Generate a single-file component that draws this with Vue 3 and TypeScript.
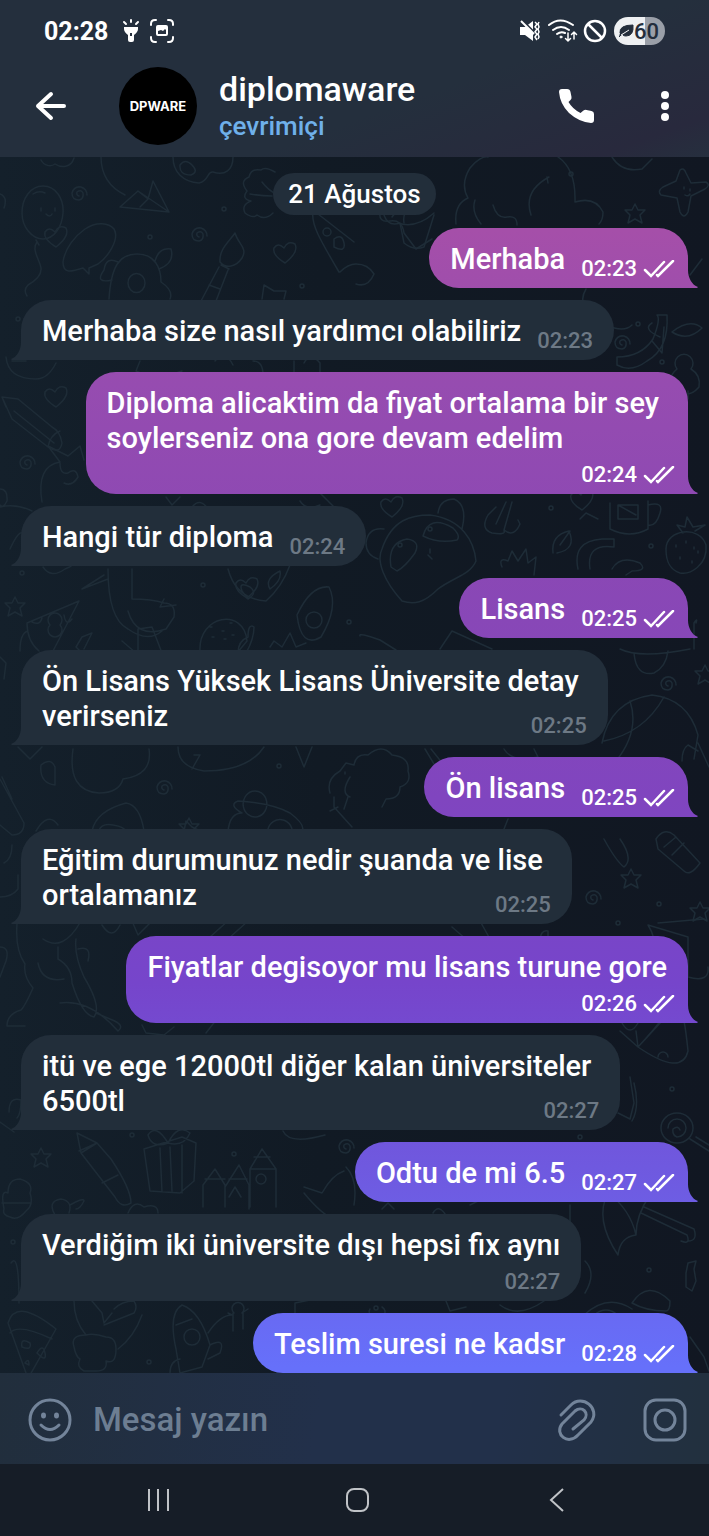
<script setup lang="ts">
import { ref } from 'vue'

interface Message {
  lines: string[]
  time: string
  own: boolean
  layout: 'inline' | 'tucked' | 'stacked' | 'stacked wide'
}

const messages: Message[] = [
  { lines: ['Merhaba'], time: '02:23', own: true, layout: 'inline' },
  { lines: ['Merhaba size nasıl yardımcı olabiliriz'], time: '02:23', own: false, layout: 'inline' },
  { lines: ['Diploma alicaktim da fiyat ortalama bir sey', 'soylerseniz ona gore devam edelim'], time: '02:24', own: true, layout: 'stacked wide' },
  { lines: ['Hangi tür diploma'], time: '02:24', own: false, layout: 'inline' },
  { lines: ['Lisans'], time: '02:25', own: true, layout: 'inline' },
  { lines: ['Ön Lisans Yüksek Lisans Üniversite detay', 'verirseniz'], time: '02:25', own: false, layout: 'tucked' },
  { lines: ['Ön lisans'], time: '02:25', own: true, layout: 'inline' },
  { lines: ['Eğitim durumunuz nedir şuanda ve lise', 'ortalamanız'], time: '02:25', own: false, layout: 'tucked' },
  { lines: ['Fiyatlar degisoyor mu lisans turune gore'], time: '02:26', own: true, layout: 'stacked' },
  { lines: ['itü ve ege 12000tl diğer kalan üniversiteler', '6500tl'], time: '02:27', own: false, layout: 'tucked' },
  { lines: ['Odtu de mi 6.5'], time: '02:27', own: true, layout: 'inline' },
  { lines: ['Verdiğim iki üniversite dışı hepsi fix aynı'], time: '02:27', own: false, layout: 'stacked' },
  { lines: ['Teslim suresi ne kadsr'], time: '02:28', own: true, layout: 'inline' },
]

const draft = ref('')

type Point = [number, number]
const spirals: Point[] = [[79, 38], [199, 79], [27, 307], [668, 528], [164, 632], [593, 742], [346, 991], [622, 187]]
const hearts: Point[] = [[285, 96], [56, 80], [392, 350], [247, 431], [582, 343], [56, 240]]
const stars: Point[] = [[635, 56], [15, 449], [189, 670], [631, 721], [41, 1000], [705, 517], [700, 754]]
const dots: Point[] = [
  [224, 52], [150, 80], [302, 129], [571, 17], [638, 167], [662, 205], [400, 388], [430, 372], [22, 416],
  [203, 428], [349, 465], [551, 351], [651, 389], [279, 609], [659, 747], [618, 766], [132, 978], [234, 997],
  [672, 932], [149, 1205], [13, 1085], [649, 1113], [580, 980], [376, 1151], [18, 162],
]
const doodles: string[] = [
  // balloon, paper plane, palette, cloud
  'M43 29c13 0 21 13 20 27S54 82 43 82 22 70 22 56s8-27 21-27zM36 83l3 5M37 85c-6 8 3 18 4 26s-6 13-13 17c-4 4-3 8-1 11M41 51v3m14-3v3m-9 3q4 4 6 0M33 37q6-4 12-1',
  'M120 50l18-16 10 8 5-18 16 31zM138 34l31 21M148 42l-8 8',
  'M101 0c0 18 8 30 24 38M173 0c0 15 10 25 26 26 10-2 8-12 14-11 12 4 20-2 20-15M180 8q5-7 12 0t-1 10q-12 0-11-10z',
  'M41 3c3 6 10 7 14 4 6 4 16 4 19-6M0 37q8 3 4 14',
  // flower, cone, brush, speech bubble
  'M275 15q-10-6-14-2-10-2-12 7-10 4-2 14-6 8 4 10-10 4-6 12 8 6 12 2 8 6 16-2M262 25q6 8 14 12M250 37q12 2 22 2',
  'M63 105c2-14 12-26 22-33 12-8 24-6 29 0 6 10-6 28-16 35l-9 4 0 6-6-6c-12 4-20 6-20-6z',
  'M235 76c-6 9-16 16-15 29 6 7 16 5 22-4 6-10-4-14-7-25zM221 108l8 4M219 110l-18 34M228 113l-12 31M209 128l11 4',
  'M313 55c-2 12 6 26 26 60M318 57l36 28M340 115q8-8 16-8 12 0 18 10-6 14-18 10M323 75a4 4 0 1 0 8 0 4 4 0 1 0-8 0M334 82q8-6 10 4t-10 4z',
  // puppy
  'M109 142c2-32 10-45 28-45 18 0 24 14 24 28 6 4 12 10 9 17M128 126a8 9 0 1 0 17 0 8 9 0 1 0-17 0M118 105q-12-6-14 8-10 14 8 10M155 104q4-14 16-12 4 14-12 20',
  'M262 142l2-14 10 6 12 0-2 8M380 54q-2 12 10 10t14 12l12 16 16-10M392 60l8-10m4 16q-2-12 8-14',
  // teddy, starfish, cactus
  'M470 11q-10 16-2 30-14 6-12 26M470 11c6-8 14-12 18-11M558 0q18 12 17 45 20-6 28 10 0 8-4 12M531 58q-8-24 18-38m-2 0l1 6M475 43q-4 12 6 24M493 48q4 14 14 12t10 8',
  'M680 13q4-3 6 3l5 10 15-1q5 3-1 7l-14 7-3 16q-4 8-8 0l-3-14-16-3q-4-4 2-8l13-6zM684 30v2m6 0v2m-5 4q3 2 5-1M612 0q10 16 30 12l10-10',
  'M400 66l4 20q10 8 20 4l10-32M398 66q18 6 36-10M384 58q4 12 16 8',
  // arm with fish, waffle
  'M586 132q-12 20 20 36 18 8 26 0M660 180q-18-8-8-14M672 175q18-14 30-4-14 14-30 4zM690 118l12-16M664 170l-2 26-10-12M617 200q24 0 36-18 8-20 4-24l10 0q2 34-20 46-16 12-30 4z',
  'M677 212a9 9 0 1 1 14 0M677 212q-12 10-2 22 14 8 24-4 2-12-8-18M688 234v8',
  // fruit bowl, pencil, cat
  'M6 200q2 22 30 22 12 0 20-16M12 204l14 0M140 204l-4 10q20 10 46 0M215 204q10-12 18 4m20-4q10 0 10 14M294 204v12m10-10q6-12 16 0v10',
  'M2 240l10 22 36 28q12 8 14-4-2-12-10-16l-34-28zM2 240l4 10M48 290q2-12 12-16M14 254l40 32',
  'M42 345q-6-36 18-40l-12-16 20 10 12-10 4 14M60 306q0 12 8 10 8-6 10 4-6 10-14 6',
  'M0 332q8 0 7 12-4 8-7 4M0 350q16-4 32 4M166 340l6 8 8-8M192 350q8-10 16 2M300 344q6 10 20 4M320 336l14 14',
  // panda
  'M402 444c-18-20-26-40-20-52 10-30 30-34 48-34 32 4 44 26 46 46-6 14-22 16-38 28-14 14-24 16-36 12zM438 356q2-14 16-14 14 6 8 30M384 372q-16-2-18 14 0 12 12 16M391 410q-4-24 16-28 14 2 8 14-10 14-18 18zM423 379q6-22 30-8 8 8 4 12-18 4-34-4zM428 398l4 4m-2-10v4',
  // anchor, mug, leaf, strawberry
  'M506 345l-10 22m16-22l-8 28q10 8 16-6l-2-4M496 350l-8 8m0 0q-8 14 4 18 14 2 12-2',
  'M610 346v26q20 10 38 0v-28M648 348q16-4 12 8-4 14-12 12M618 348h20v14h-20zM618 348l18 10',
  'M553 396q-2-18 16-22 8 18-12 22M560 388l10-14M580 362l6-6 12 6',
  'M666 392c0-20 34-24 40-4 2 20-16 30-26 28-12-4-14-14-14-24zM683 376l-6-8 8 2 2-10 6 10 12-2-10 6M676 388v2m10-6v2m8 4v2m-14 8v2m12 2v2m6-12v2',
  'M502 410q-4-10 6-6l4-10 6 10 8-12 2 14 8-6-2 18M578 412q-6-28 24-30h12v8q-28-4-24 22M612 412q8-14 28-6 8 8-8 8l-6 4',
  // stork
  'M108 412q0 50 20 60 20 14 34 2M132 412v30q20 0 32 4 12 0 10 14l-8 12q-30 10-38-18M82 432l26-10M82 432l22-14M164 442l-4 8 16-2M138 472v22m0-22l14-2 10 26M43 410q8 12 22 2 12-4 10-12M10 392q10-22 14-14',
  // party hat, burger, avocado, corn
  'M27 466l52-22-26 50M27 466q0 18 12 28M50 468a7 7 0 1 0 10 0 7 7 0 1 0-10 0M32 465q8 4 10-4M64 458q2 12 8 4M20 494q0-18 8-20',
  'M200 494c-2-36 44-44 47-10l-10 12zM238 496q0-12 10-16 0-14 6-10 0 12-8 26M210 470h2m10 4h2m6-8h2m-8 16h2m6-4h2m-22 2h2M270 490l4-6 8 6 8-14 6 14 10-4',
  'M297 458q14-30 32-28 10 20-8 50-20 12-24-22zM306 463a8 8 0 1 0 16 0 8 8 0 1 0-16 0',
  'M228 412q8 30 38 32 16-14 24-36M242 434q-4-10 8-4 8 6-2 12zM270 432q-6-10 10-18 2 10-10 18M360 479q-2-4 20 4l16 10M440 492l12-18 40 18M82 496l-6-6 6-10 10-4-8 16M122 484l14 12',
  // kite, lemon, ball
  'M18 590l12 12 12-12M73 592q-6 42 26 44 20 0 24-14 30-4 26-30M178 590q0 20 26 24 44 0 60-24M192 612l8-14-6 0M296 590l8 20 8-20',
  'M0 622l24 44q0 12-12 12L0 668M2 620l10 22M41 608q10-8 14 2v18q-16-2-14-20zM0 500l6 6-2 16',
  'M602 586q8-42 50-48 36 4 46 40l-4 24M630 544q10 30-14 60M604 584q40-8 60-44M682 604q0-12 6-16l10 6M698 586l11 24',
  'M634 496q2 24 20 20 12-6 14-22M620 492q20 10 70 0M694 492v-26q4-6 2 0',
  'M92 674q4-20 34-28 14 2 18 28M99 674q2-8 14-6t12 6M36 674q12-20 22-6M184 674l2-10 6 6 8 4',
  // astronaut, sheep
  'M228 674q2-18 14-18-14-8-4-12 34 2 52 12 16 12 12 18 20 0 12 18M245 640a10 11 0 1 1 20 14 10 11 0 0 1-20-14M268 672a12 12 0 1 1 24 6',
  'M330 636q-4-14 10-22l6-8 8 2M334 640v10l18 20m-22-16l8-4M354 608q2-12 14-10 14-12 24 0 18 2 16 16 4 12-8 16 0 12-14 12l-4 8m-34-10l-4 12M345 615v2M350 640q-10-4 0-20',
  'M425 592l12 20m-6-20l16 20M504 592q8 14 34 8l-4-8M515 608q20-12 24-2',
  // socks, can, violin
  'M656 682q8-12 18-4l26 28q-10 14-16 8l-26-22zM664 690l12-10M672 698l12-12M604 682q12 22 20 28 10-8-4-28M500 682l8-20m4 24q12 10 22 0',
  'M0 740q12 0 18-8v-14M0 790q10 0 6 14l-6 16M12 688q0 14-8 18',
  // guitar and crocodile
  'M17 767q-2 26 8 40-2 12 8 24-8 18-12 22-14 4-14 16h18M43 782q20 14 38-18M58 790v12q14 8 14 24 10 32 22 34 8-10-10-40-10-22-8-38M38 806q4 20 26 16M78 792q14-4 10 12M102 768q10 16 18 0M132 764l6 14 12-12M60 846q30-4 58 28 8-6-8-12l-14-6M142 868l4 8 18 2 10-8M206 876l14-18 10 6',
  'M210 780l20-18M228 782l20-18M452 770l30 26M480 764l10 18M540 786q0-14 8-12v12M648 768l40 12 0 40q22 6 20-10M648 768q4 6 6 14m4-16 46-4',
  // pizza, rocket, lollipop
  'M620 874l18 16 24-26M638 890l-2-16M638 890q20-22 22-26M638 890q44 30 50 4-2-20-4-30M622 866q8 14 16 0M658 900a5 5 0 1 1 10 0',
  'M9 955q0-16 12-12 0 14-4 18M14 975l-14-10M630 920l4 26-4 16-12-6M634 926q6 24-2 38',
  'M661 971a16 15 0 1 0 32 0 16 15 0 1 0-32 0M668 971a9 9 0 1 1 9 9q-5-2-4-8 5-4 7 1M690 982l19 12M696 980l13 8',
  'M77 976l4 20 16-10zM81 996l34 44q6 12 16 6 0-14-20-44l-14-16M102 1026l16-8M97 986l-18 8',
  'M144 992l6 42 30 2 14-12 2-38-14-6zM182 988l0 48M160 991l2 44M170 990l2 44M168 986q-12-20-20-8 4 14 20 8zm0 0q10-20 22-10-6 14-22 10M283 974q6 14 42 4',
  // castle
  'M203 1050v-22l12-16 10 16v22M225 1030l14-22 10 20v24M250 1050v-38h26v38M250 1012l12-20 14 20M256 1022a5 5 0 1 0 10 0 5 5 0 1 0-10 0M254 1000h16M205 1022h20m4 0h18M229 1040l6-10 6 10',
  'M4 1052q-4-20 4-16 0-14 12-14 14 4 10 14 4 12-4 18-8 10-16 6-8-2-6-8zM2 1046h28M55 1058q-8-14 6-16 12 2 8 14M70 1048q14-8 14-4-4 8-8 8M304 1036q18 22 30 26M304 1030l18 6q10-18 22-22M346 1010q12 12 8 38',
  'M128 1056q6-14 16-6 14-4 14 6M382 1052l6-6 6 6M433 1056q6-10 14 4M470 1048l8-4M570 1048v18M11 1106q8-12 8 40M585 1104q12 12 0 32',
  // pizza slice, dinosaur, rocket, diver
  'M8 1166q8-26 48 6l-26 46M8 1166l18 50M10 1176q8-10 42 6M22 1190q-2-10 8-4 2 8-8 4M37 1196q6-10 8 0t-8 0M25 1206q4-6 4 2z',
  'M74 1144q0 20 12 34-16 0-12 12 2 10 6 12-4 8 4 12h12q12 0 10-10 10 4 10-12 0-12-10-12-12-4-20-2M118 1192q16-12 24-34M104 1168l30-12q4-6 0-12-12 0-20 8M92 1144l10 12 2 10 8-10',
  'M176 1192q-8-36 6-44 18 6 28 40l-8 22-22 6zM176 1168l16-6M184 1180a8 8 0 1 0 16 0 8 8 0 1 0-16 0M170 1216q0-12 10-14M210 1188q16-8 10 8l-12 6M208 1176q12-18 24-18M234 1156a6 6 0 1 1 8 0l6-4m-16 6-4-2m5 0v18m10-18 0 16',
  // umbrella, mushroom, candy
  'M608 1036q-14 26 10 62 2-18 18-20-6-26-28-42zM608 1036q20-10 44 2-10-2-14 6M636 1078q0-20 14-40M610 1032q14-14 38-10l4 16M641 1056l46 22q4 10-6 6M644 1050l50 22q4 12-6 12',
  'M632 1146q16-24 38-2 0 10-4 10-20 0-34-8zM584 1158q24-22 48-6M594 1158q12-10 24 0M688 1106l8-2-2 8 2 12-4 10-6-4 0-14zM690 1180l14 20 5 14M446 1144l4 10 16-4M500 1148q18 14 44-4',
  'M295 1158v-12l20-4M370 1152a8 6 0 1 0 12-2',
]
</script>

<template>
  <div class="phone">
    <header class="top">
      <div class="status">
        <span class="clock">02:28</span>
        <svg class="torch" width="18" height="24" viewBox="0 0 18 24" aria-hidden="true">
          <path d="M2 8h14v2q0 3-4 6v5q0 2-2 2H8q-2 0-2-2v-5Q2 13 2 10z" fill="#fff" />
          <path d="M9 1v2M2 3l2 2M16 3l-2 2" stroke="#fff" stroke-width="2" stroke-linecap="round" />
          <path d="M9 14v3" stroke="#26303e" stroke-width="2" />
        </svg>
        <svg width="24" height="24" viewBox="0 0 24 24" fill="none" aria-hidden="true">
          <path d="M1 6V5q0-4 4-4h1M18 1h1q4 0 4 4v1M23 18v1q0 4-4 4h-1M6 23H5q-4 0-4-4v-1" stroke="#fff" stroke-width="2" stroke-linecap="round" />
          <rect x="6" y="6" width="12" height="11" rx="2" fill="#fff" />
          <path d="M8 15v-3l3-1 2 1 2-2 1 1v4z" fill="#26303e" />
        </svg>
        <span class="spring"></span>
        <svg class="mute" width="22" height="22" viewBox="0 0 22 22" fill="none" aria-hidden="true">
          <path d="M1 7h5l8-6v20l-8-6H1z" fill="#fff" />
          <path d="M3 0l13 13" stroke="#26303e" stroke-width="2" />
          <path d="M2 1l13 13" stroke="#fff" stroke-width="2" />
          <path d="M16 2l2 2-2 3 2 2-2 3 2 2-2 3 2 3M20 2l-1 2 1 3-1 2 1 3-1 2 1 3-1 2" stroke="#fff" stroke-width="1.500" />
        </svg>
        <svg width="30" height="24" viewBox="0 0 30 24" fill="none" stroke="#fff" stroke-width="2" stroke-linecap="round" aria-hidden="true">
          <path d="M1 6q11-9 24 0M5 11q8-6 16 0M9 15q4-3 8-1" />
          <circle cx="13" cy="18" r="1" fill="#fff" stroke-width="1" />
          <path d="M20 14v8m-2.500-2.500L20 22l2.500-2.500M26 20v-7m-2.500 2.500L26 13l2.500 2.500" stroke-width="1.500" />
        </svg>
        <svg width="24" height="24" viewBox="0 0 24 24" fill="none" stroke="#fff" stroke-width="2.500" aria-hidden="true">
          <circle cx="12" cy="12" r="10" />
          <path d="M5 5l14 14" />
        </svg>
        <span class="battery">
          <svg width="16" height="16" viewBox="0 0 16 16" aria-hidden="true">
            <path d="M2 10Q1 2 15 2q1 11-7 11-2 0-3-1l6-5-8 5-2 2" fill="#232d3b" stroke="#232d3b" />
            <path d="M3 12l8-5" stroke="#eef0f2" />
          </svg>60
        </span>
      </div>
      <div class="bar">
        <button class="icon-btn back" type="button" aria-label="Geri">
          <svg width="32" height="30" viewBox="0 0 32 30" fill="none" stroke="#fff" stroke-width="4" stroke-linecap="round" stroke-linejoin="round">
            <path d="M16 3L3 15l13 12M3 15h26" />
          </svg>
        </button>
        <div class="avatar">DPWARE</div>
        <div class="who">
          <h1>diplomaware</h1>
          <p>çevrimiçi</p>
        </div>
        <button class="icon-btn call" type="button" aria-label="Ara">
          <svg width="36" height="36" viewBox="0 0 36 36" fill="#fff">
            <path d="M3 1h5q3 0 3.500 3l1 5q.3 2-1 3l-2 2q4 7 12 11l3-2.500q1.500-1 3-.5l5 1q2.500.5 2.500 3v6q0 3-3 3Q20 34 10 25 1 16 0 4q0-3 3-3z" />
          </svg>
        </button>
        <button class="icon-btn more" type="button" aria-label="Diğer">
          <svg width="10" height="32" viewBox="0 0 10 32" fill="#fff">
            <circle cx="5" cy="5" r="4" /><circle cx="5" cy="16" r="4" /><circle cx="5" cy="27" r="4" />
          </svg>
        </button>
      </div>
    </header>

    <main class="chat">
      <svg class="wallpaper" viewBox="0 0 709 1216" preserveAspectRatio="xMidYMin slice" aria-hidden="true">
        <defs>
          <path id="spiral" d="M0 1q-3-1-2-4 4-3 6 1 1 6-4 7-7 0-7-7 2-7 9-6 6 2 6 8" />
          <path id="heart" d="M0 10Q-13 2-11-5q4-6 10 0 4-8 11-4 4 8-10 19z" />
          <path id="star" d="M0-9l3 6 7 0-5 5 2 8-7-4-7 4 2-8-5-5 7 0z" />
        </defs>
        <g>
          <path v-for="(d, i) in doodles" :key="i" :d="d" />
          <use v-for="([x, y], i) in spirals" :key="'s' + i" href="#spiral" :x="x" :y="y" />
          <use v-for="([x, y], i) in hearts" :key="'h' + i" href="#heart" :x="x" :y="y" />
          <use v-for="([x, y], i) in stars" :key="'t' + i" href="#star" :x="x" :y="y" />
          <circle v-for="([x, y], i) in dots" :key="'d' + i" :cx="x" :cy="y" r="2" />
        </g>
      </svg>

      <time class="day">21 Ağustos</time>
      <article
        v-for="(m, i) in messages"
        :key="i"
        class="bubble"
        :class="[m.own ? 'own' : 'peer', m.layout]"
      >
        <p><span v-for="(line, n) in m.lines" :key="n" class="line">{{ line }}</span></p>
        <span class="meta">
          <time>{{ m.time }}</time>
          <svg v-if="m.own" width="32" height="18" viewBox="0 0 32 18" fill="none" stroke="#fff" stroke-width="2.500" stroke-linecap="round" role="img" aria-label="Okundu">
            <path d="M2 10l6 6L21 2M14 15l1 1L30 1" />
          </svg>
        </span>
      </article>
    </main>

    <form class="composer" @submit.prevent>
      <button class="icon-btn" type="button" aria-label="Emoji">
        <svg width="44" height="44" viewBox="0 0 44 44" fill="none" stroke="#73849a" stroke-width="3" stroke-linecap="round">
          <circle cx="22" cy="22" r="20" />
          <path d="M13 27q9 9 18 0" />
          <ellipse cx="15.500" cy="17.500" rx="1" ry="1.500" />
          <ellipse cx="28.500" cy="17.500" rx="1" ry="1.500" />
        </svg>
      </button>
      <input v-model="draft" type="text" placeholder="Mesaj yazın" aria-label="Mesaj yazın" />
      <button class="icon-btn" type="button" aria-label="Dosya ekle">
        <svg width="40" height="44" viewBox="0 0 40 44" fill="none" stroke="#73849a" stroke-width="3" stroke-linecap="round">
          <path d="M4 17L14 7C25-4 44 10 34 24L21 37C11 48-3 36 5 26L18 13C25 7 33 15 27 22L16 31" />
        </svg>
      </button>
      <button class="icon-btn camera" type="button" aria-label="Kamera">
        <svg width="44" height="44" viewBox="0 0 44 44" fill="none" stroke="#73849a" stroke-width="3">
          <rect x="2" y="2" width="40" height="40" rx="11" />
          <circle cx="22" cy="22" r="10" />
        </svg>
      </button>
    </form>

    <nav class="keys">
      <button class="icon-btn" type="button" aria-label="Son uygulamalar">
        <svg width="24" height="24" viewBox="0 0 24 24" stroke="#c0c3c7" stroke-width="2"><path d="M2 1v22M11 1v22M21 1v22" /></svg>
      </button>
      <button class="icon-btn" type="button" aria-label="Ana ekran">
        <svg width="24" height="24" viewBox="0 0 24 24" fill="none" stroke="#c0c3c7" stroke-width="2"><rect x="1" y="1" width="21" height="22" rx="7" /></svg>
      </button>
      <button class="icon-btn" type="button" aria-label="Geri">
        <svg width="24" height="24" viewBox="0 0 24 24" fill="none" stroke="#c0c3c7" stroke-width="2"><path d="M18 1L6 12l12 11" /></svg>
      </button>
    </nav>
  </div>
</template>

<style>
body {
  margin: 0;
  background: #161d27;
}
</style>

<style scoped>
.phone {
  display: flex;
  flex-direction: column;
  min-height: 100vh;
  font-family: Roboto, 'Noto Sans', sans-serif;
  font-weight: 500;
  color: #fff;
}
h1,
p {
  margin: 0;
  font-weight: 500;
}
svg {
  display: block;
  flex: none;
}
.icon-btn {
  flex: none;
  padding: 0;
  border: 0;
  background: none;
}
.top {
  box-sizing: border-box;
  height: 157px;
  background: linear-gradient(160deg, #242f3d 60%, #28293d 90%, #262f3e);
}
.status {
  display: flex;
  align-items: center;
  gap: 5px;
  height: 62px;
  padding: 0 44px;
}
.clock {
  font-size: 25px;
  font-weight: 700;
}
.torch {
  margin: 0 5px 0 9px;
}
.spring {
  flex: 1;
}
.mute {
  margin-right: 2px;
}
.battery {
  display: flex;
  align-items: center;
  height: 28px;
  margin-left: 2px;
  padding: 0 6px 0 4px;
  border-radius: 14px;
  background: linear-gradient(90deg, #eef0f2 60%, #9a9fa8 60%);
  color: #232d3b;
  font-size: 22px;
}
.bar {
  display: flex;
  align-items: center;
  padding: 5px 39px 0 35px;
}
.avatar {
  display: flex;
  align-items: center;
  justify-content: center;
  width: 78px;
  height: 78px;
  margin-left: 52px;
  border-radius: 50%;
  background: #000;
  font: 700 13px Inter, sans-serif;
}
.who {
  flex: 1;
  margin-left: 22px;
}
.who h1 {
  font-size: 34px;
  line-height: 40px;
}
.who p {
  font-size: 26px;
  line-height: 34px;
  color: #6fb0ea;
}
.more {
  margin-left: 65px;
}
.chat {
  position: relative;
  isolation: isolate;
  flex: 1;
  display: flex;
  flex-direction: column;
  justify-content: flex-end;
  gap: 12px;
  overflow: hidden;
  padding: 0 21px;
  background: linear-gradient(90deg, #14202b, #111a24 45%, #111722);
}
.wallpaper {
  position: absolute;
  inset: 0;
  z-index: -1;
  width: 100%;
  height: 100%;
  fill: none;
  stroke: #1e2c37;
  stroke-width: 1.500;
  stroke-linecap: round;
  stroke-linejoin: round;
}
.day {
  align-self: center;
  margin-bottom: 1px;
  padding: 0 15px;
  border-radius: 21px;
  background: #222e3a;
  font-size: 26px;
  line-height: 42px;
}
.bubble {
  position: relative;
  display: grid;
  padding: 14px 21px 6px;
  border-radius: 30px;
  font-size: 29px;
  line-height: 35px;
}
.line {
  display: block;
}
.line:last-child {
  padding-bottom: 5px;
}
.bubble::after {
  content: '';
  position: absolute;
  bottom: 0;
  width: 11px;
  height: 20px;
  background: inherit;
}
.own {
  align-self: flex-end;
  padding-right: 13px;
  border-bottom-right-radius: 0;
  background: linear-gradient(#ac52a4 10%, #a54fa9 15%, #964cb0 25%, #8b48b4 36%, #8045bf 52%, #7645cb 64%, #6f59df 76%, #6670fa 89%) fixed;
}
.own::after {
  left: 100%;
  clip-path: path('M0 2C0 10 4 17 10 19L9 20H0Z');
}
.peer {
  align-self: flex-start;
  border-bottom-left-radius: 0;
  background: #222e3a;
}
.peer::after {
  right: 100%;
  clip-path: path('M11 2C11 10 7 17 1 19L2 20H11Z');
}
.inline {
  grid-template-columns: auto auto;
  column-gap: 16px;
}
.tucked {
  grid-template-columns: auto auto;
}
.tucked p {
  display: contents;
}
.tucked .line:first-child {
  grid-column: 1 / -1;
  padding-right: 8px;
}
.own.stacked p {
  padding-right: 8px;
}
.own.wide p {
  padding-right: 16px;
}
.meta {
  display: flex;
  align-items: center;
  justify-self: end;
  align-self: end;
  gap: 6px;
  font-size: 22px;
  line-height: 27px;
}
.peer .meta {
  color: #6d7985;
}
.composer {
  box-sizing: border-box;
  display: flex;
  align-items: center;
  height: 91px;
  padding: 2px 22px 0 28px;
  background: linear-gradient(100deg, #212e3c, #22304a 45%, #22304a 70%, #22303e);
}
.composer input {
  flex: 1;
  min-width: 0;
  margin: 0 20px 0 21px;
  padding: 0;
  border: 0;
  outline: 0;
  background: none;
  color: #fff;
  font: 500 33px Roboto, 'Noto Sans', sans-serif;
}
.composer input::placeholder {
  color: #6d7e92;
  opacity: 1;
}
.camera {
  margin-left: 46px;
}
.keys {
  display: flex;
  align-items: center;
  justify-content: space-between;
  height: 72px;
  padding: 0 140px 0 147px;
  background: #161d27;
}
</style>
